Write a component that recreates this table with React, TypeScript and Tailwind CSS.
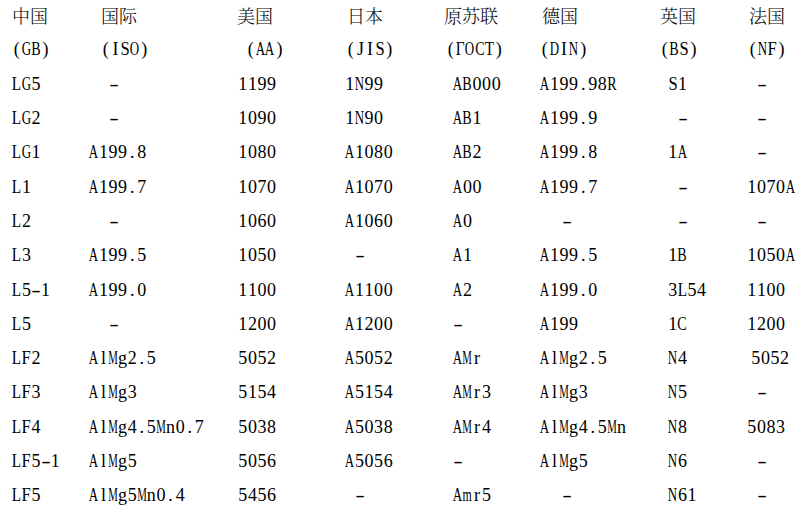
import React from "react";

const colW = [
  "w-[77px]",
  "w-[148px]",
  "w-[108px]",
  "w-[99px]",
  "w-[96px]",
  "w-[120px]",
  "w-[87px]",
  "w-[60px]",
];

const h1Pad = ["pl-0", "pl-[12px]", "pl-0", "pl-[2px]", "pl-0", "pl-[2px]", "pl-0", "pl-[2px]"];
const h2Pad = ["pl-0", "pl-[12px]", "pl-[9px]", "pl-[1px]", "pl-[2px]", "pl-0", "pl-0", "pl-[1px]"];
const txtPad = ["pl-0", "pl-0", "pl-px", "pl-0", "pl-[9px]", "pl-0", "pl-[8px]", "pl-0"];
const dashPad = ["pl-0", "pl-[20px]", "pl-[10px]", "pl-[10px]", "pl-[9px]", "pl-[22px]", "pl-[18px]", "pl-[10px]"];

const head1 = ["中国", "国际", "美国", "日本", "原苏联", "德国", "英国", "法国"];
const head2 = ["(GB)", "(ISO)", "(AA)", "(JIS)", "(ΓOCT)", "(DIN)", "(BS)", "(NF)"];

const rows: string[][] = [
  ["LG5", "-", "1199", "1N99", "AB000", "A199.98R", "S1", "-"],
  ["LG2", "-", "1090", "1N90", "AB1", "A199.9", "-", "-"],
  ["LG1", "A199.8", "1080", "A1080", "AB2", "A199.8", "1A", "-"],
  ["L1", "A199.7", "1070", "A1070", "A00", "A199.7", "-", "1070A"],
  ["L2", "-", "1060", "A1060", "A0", "-", "-", "-"],
  ["L3", "A199.5", "1050", "-", "A1", "A199.5", "1B", "1050A"],
  ["L5-1", "A199.0", "1100", "A1100", "A2", "A199.0", "3L54", "1100"],
  ["L5", "-", "1200", "A1200", "-", "A199", "1C", "1200"],
  ["LF2", "AlMg2.5", "5052", "A5052", "AMr", "AlMg2.5", "N4", "5052"],
  ["LF3", "AlMg3", "5154", "A5154", "AMr3", "AlMg3", "N5", "-"],
  ["LF4", "AlMg4.5Mn0.7", "5038", "A5038", "AMr4", "AlMg4.5Mn", "N8", "5083"],
  ["LF5-1", "AlMg5", "5056", "A5056", "-", "AlMg5", "N6", "-"],
  ["LF5", "AlMg5Mn0.4", "5456", "-", "Amr5", "-", "N61", "-"],
];

const serif =
  "font-['Liberation_Serif','Noto_Serif_CJK_SC','Noto_Sans_CJK_SC',serif] text-[18px] leading-none";
const cjk =
  "font-['Noto_Serif_CJK_SC','Noto_Sans_CJK_SC',serif] text-[18px] leading-none font-light";

const squeeze: Record<string, string> = {
  M: "scale-x-[0.6]",
  m: "scale-x-[0.66]",
  A: "scale-x-[0.72]",
  D: "scale-x-[0.72]",
  G: "scale-x-[0.72]",
  N: "scale-x-[0.72]",
  O: "scale-x-[0.72]",
  B: "scale-x-[0.78]",
  C: "scale-x-[0.78]",
  R: "scale-x-[0.78]",
  E: "scale-x-[0.85]",
  L: "scale-x-[0.85]",
  T: "scale-x-[0.85]",
  Γ: "scale-x-[0.85]",
  S: "scale-x-[0.92]",
  F: "scale-x-[0.92]",
  "-": "scale-x-[1.6]",
};

function Mono({ text }: { text: string }) {
  return (
    <span className="inline-flex">
      {Array.from(text).map((c, i) => (
        <span key={i} className="inline-flex w-[9.6px] justify-center">
          <span className={`inline-block ${squeeze[c] ?? ""}`}>{c}</span>
        </span>
      ))}
    </span>
  );
}

function Row({ children }: { children: React.ReactNode }) {
  return <div className="flex h-[34.3px] items-center pl-[12px]">{children}</div>;
}

export default function App() {
  return (
    <div className="w-[807px] h-[513px] overflow-hidden bg-white text-black">
      <div className="-mt-[2px]">
        <Row>
          {head1.map((t, i) => (
            <div key={i} className={`${colW[i]} ${h1Pad[i]} ${cjk} shrink-0`}>
              {t}
            </div>
          ))}
        </Row>
        <Row>
          {head2.map((t, i) => (
            <div key={i} className={`${colW[i]} ${h2Pad[i]} ${serif} shrink-0`}>
              <Mono text={t} />
            </div>
          ))}
        </Row>
        {rows.map((r, ri) => (
          <Row key={ri}>
            {r.map((t, i) => (
              <div
                key={i}
                className={`${colW[i]} ${t === "-" ? dashPad[i] : txtPad[i]} ${serif} shrink-0 whitespace-nowrap ${
                  i === 7 && t === "5052" ? "pl-[4px]" : ""
                }`}
              >
                <Mono text={t} />
              </div>
            ))}
          </Row>
        ))}
      </div>
    </div>
  );
}
